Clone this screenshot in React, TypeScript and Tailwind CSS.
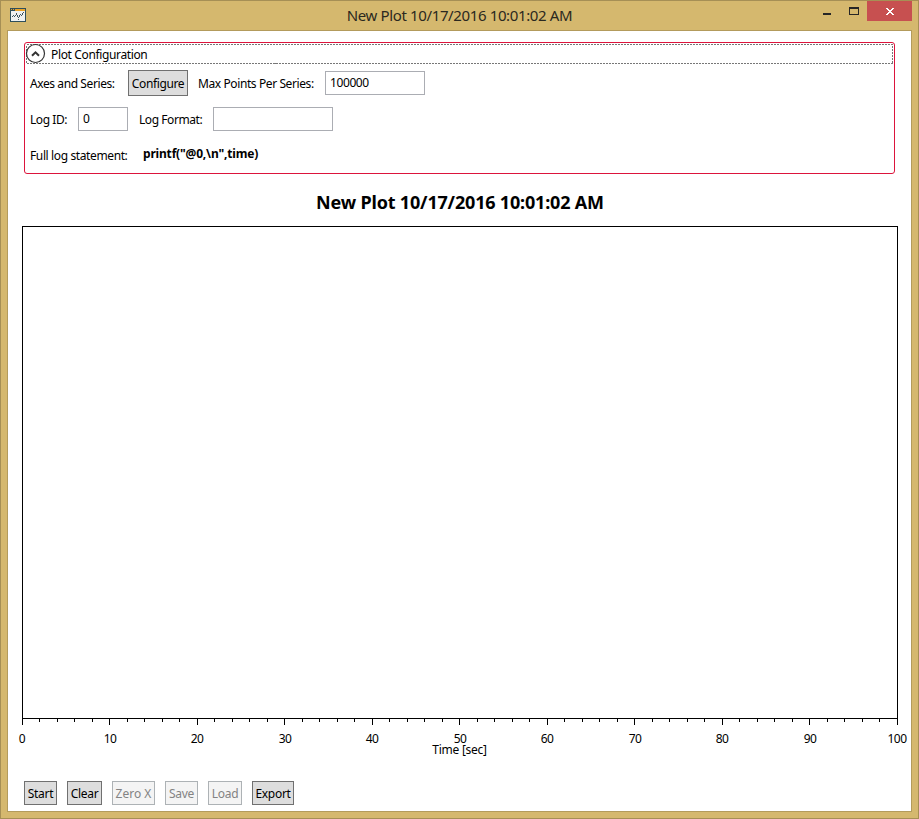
import type { ReactNode } from "react";

const MINOR_TICKS = Array.from({ length: 51 }, (_, i) => i);
const MAJOR_TICKS = Array.from({ length: 11 }, (_, i) => i * 10);
const PLOT_LEFT = 14;
const tickX = (i: number) => PLOT_LEFT + Math.floor(i * 17.5);
const labelX = (value: number) => PLOT_LEFT + Math.ceil(value * 8.75) + 0.1;

function TitleBar() {
  return (
    <div className="relative flex h-[29px] shrink-0 justify-center">
      <svg className="absolute left-[9px] top-[7px]" width="16" height="14" shapeRendering="crispEdges">
        <rect width="16" height="14" fill="#2f4f5b" />
        <rect x="1" y="3" width="14" height="10" fill="#eef0f0" />
        <rect x="5" y="1" width="10" height="2" fill="#e9a227" />
        <rect x="1" y="1" width="1" height="1" fill="#e9a227" />
        <rect x="3" y="1" width="1" height="1" fill="#e9a227" />
        <g fill="#3f5660">
          <rect x="2" y="8" width="1" height="1" />
          <rect x="3" y="7" width="1" height="1" />
          <rect x="4" y="8" width="1" height="1" />
          <rect x="5" y="7" width="1" height="1" />
          <rect x="6" y="5" width="1" height="2" />
          <rect x="7" y="7" width="1" height="2" />
          <rect x="8" y="9" width="1" height="1" />
          <rect x="9" y="7" width="1" height="2" />
          <rect x="10" y="6" width="1" height="1" />
          <rect x="11" y="7" width="1" height="1" />
          <rect x="12" y="5" width="1" height="2" />
          <rect x="13" y="4" width="1" height="1" />
          <rect x="8" y="11" width="1" height="1" />
        </g>
      </svg>
      <div className="pt-[4px] text-[15px] leading-5 tracking-[-0.37px] text-[#2b2820]">
        New Plot 10/17/2016 10:01:02 AM
      </div>
      <div className="absolute right-[6px] top-0 flex h-5">
        <div className="mr-[18px] mt-[12px] h-[2px] w-[8px] bg-[#262626]" />
        <div className="mr-2 mt-[6px] h-[8px] w-[10px] border border-t-2 border-[#262626]" />
        <div className="flex h-5 w-[45px] justify-center bg-[#c75050] pt-[7px]">
          <svg width="8" height="7" viewBox="0 0 8 7" shapeRendering="crispEdges" fill="#fff">
            <path d="M0 0h2v1h1v1h2v-1h1v-1h2v1h-1v1h-1v1h-1v1h1v1h1v1h1v1h-2v-1h-1v-1h-2v1h-1v1h-2v-1h1v-1h1v-1h1v-1h-1v-1h-1v-1h-1z" />
          </svg>
        </div>
      </div>
    </div>
  );
}

function TextBox({ className, value }: { className: string; value?: string }) {
  return (
    <div className={`h-6 border border-[#abadb3] bg-white pl-[4px] pt-[3px] tracking-[-0.4px] ${className}`}>
      {value}
    </div>
  );
}

function Button({ className, disabled, children }: { className: string; disabled?: boolean; children: ReactNode }) {
  const look = disabled
    ? "border-[#adb2b5] bg-[#f4f4f4] text-[#838383]"
    : "border-[#707070] bg-[#dddddd] text-black";
  return <div className={`flex justify-center whitespace-nowrap border ${look} ${className}`}>{children}</div>;
}

function Configuration() {
  return (
    <div className="ml-4 mt-[11px] h-[132px] w-[871px] shrink-0 rounded-[3px] border border-[#dc143c] pl-px pt-px">
      <div className="relative h-5 w-[867px] pl-[25px] pt-[3px] tracking-[-0.36px]">
        <svg className="absolute left-0 top-0 overflow-visible" width="867" height="20" fill="none">
          <rect x=".5" y=".5" width="866" height="19" stroke="#777" strokeDasharray="2 1" shapeRendering="crispEdges" />
          <circle cx="9.5" cy="9.5" r="9" fill="#fff" stroke="#333" strokeWidth="1.2" />
          <path d="M6 11.8 9.5 8.3 13 11.8" stroke="#333" strokeWidth="2" />
        </svg>
        Plot Configuration
      </div>
      <div className="mt-[6px] flex h-[26px] pl-1">
        <div className="w-[98px] pt-[6px] tracking-[-0.41px]">Axes and Series:</div>
        <Button className="h-[26px] w-[60px] pt-[5px] tracking-[-0.38px]">Configure</Button>
        <div className="w-[137px] pl-[10px] pt-[6px] tracking-[-0.4px]">Max Points Per Series:</div>
        <TextBox className="mt-px w-[100px]" value="100000" />
      </div>
      <div className="mt-[11px] flex h-6 pl-1">
        <div className="w-[48px] pt-[5px] tracking-[-0.42px]">Log ID:</div>
        <TextBox className="w-[50px]" value="0" />
        <div className="w-[85px] pl-[11px] pt-[5px] tracking-[-0.44px]">Log Format:</div>
        <TextBox className="w-[120px]" />
      </div>
      <div className="mt-[15px] flex pl-1">
        <div className="w-[113px] pt-[2px] tracking-[-0.38px]">Full log statement:</div>
        <div className="font-bold tracking-[-0.18px]">{'printf("@0,\\n",time)'}</div>
      </div>
    </div>
  );
}

function Chart() {
  return (
    <svg className="mt-[12px] block shrink-0" width="903" height="540" fontSize="12" textAnchor="middle">
      <rect x="14.5" y=".5" width="875" height="492" fill="#fff" stroke="#000" shapeRendering="crispEdges" />
      {MINOR_TICKS.map((i) => (
        <rect key={i} x={tickX(i)} y="493" width="1" height={i % 5 === 0 ? 6 : 3} shapeRendering="crispEdges" />
      ))}
      {MAJOR_TICKS.map((v) => (
        <text key={v} x={labelX(v)} y="517" className="tracking-[-0.4px]">{v}</text>
      ))}
      <text x="451.6" y="528" className="tracking-[-0.26px]">Time [sec]</text>
    </svg>
  );
}

export default function App() {
  return (
    <div className="flex h-[819px] w-[919px] flex-col overflow-hidden border border-[#a68f55] bg-[#d5b86e] font-['Noto_Sans','Open_Sans',sans-serif] text-[12px] leading-4 text-black">
      <TitleBar />
      <div className="ml-[6px] flex h-[782px] w-[905px] flex-col border border-[#b39b5c] bg-white">
        <Configuration />
        <div className="mt-[16px] pl-px text-center text-[18px] font-bold leading-6 tracking-[-0.18px]">
          New Plot 10/17/2016 10:01:02 AM
        </div>
        <Chart />
        <div className="ml-4 mt-[15px] flex gap-[10px] tracking-[-0.3px]">
          <Button className="h-6 w-[33px] pt-[4px]">Start</Button>
          <Button className="h-6 w-[35px] pt-[4px]">Clear</Button>
          <Button disabled className="h-6 w-[43px] pt-[4px] tracking-[0px]">Zero X</Button>
          <Button disabled className="h-6 w-[33px] pt-[4px]">Save</Button>
          <Button disabled className="h-6 w-[34px] pt-[4px]">Load</Button>
          <Button className="h-6 w-[42px] pt-[4px]">Export</Button>
        </div>
      </div>
    </div>
  );
}
